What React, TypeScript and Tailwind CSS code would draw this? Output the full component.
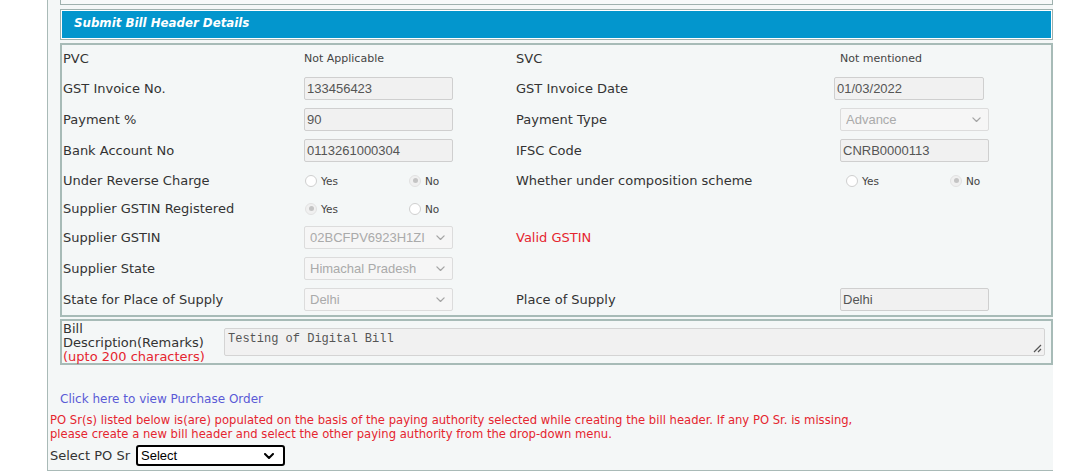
import React from 'react';

const LABEL = 'font-["DejaVu_Sans",Verdana,sans-serif] text-[13px] text-[#333]';
const BOX = 'font-["Liberation_Sans",Arial,sans-serif] text-[13px]';

const Chevron: React.FC<{ className?: string; stroke?: string; w?: number; size?: number }> = ({ className, stroke = '#a5a5a5', w = 1.4, size = 9 }) => (
  <svg className={className} width={size} height={size * 0.6} viewBox="0 0 10 6" fill="none">
    <path d="M1 1l4 4 4-4" stroke={stroke} strokeWidth={w} strokeLinecap="round" strokeLinejoin="round" />
  </svg>
);

const TextBox: React.FC<{ value: string; className?: string }> = ({ value, className = '' }) => (
  <div className={`h-[23px] flex items-center px-[2px] border border-[#cfcfcf] rounded-[2px] bg-[#f1f1f1] text-[#555] ${BOX} ${className}`}>
    {value}
  </div>
);

const SelectBox: React.FC<{ value: string; className?: string }> = ({ value, className = '' }) => (
  <div className={`h-[23px] flex items-center justify-between pl-[5px] pr-[7px] border border-[#dcdcdc] rounded-[2px] bg-[#f6f6f6] text-[#aaa] ${BOX} ${className}`}>
    <span className="whitespace-nowrap overflow-hidden">{value}</span>
    <Chevron className="shrink-0 ml-1" />
  </div>
);

const Radio: React.FC<{ checked?: boolean; label: string }> = ({ checked, label }) => (
  <span className="flex items-center gap-[4px]">
    <span className={`w-[12px] h-[12px] rounded-full border flex items-center justify-center ${checked ? 'border-[#e2e2e2] bg-[#f0f0f0]' : 'border-[#cfcfcf] bg-white'}`}>
      {checked && <span className="w-[5px] h-[5px] rounded-full bg-[#c4c4c4]" />}
    </span>
    <span className="font-['DejaVu_Sans',Verdana,sans-serif] text-[10.5px] text-[#444] mt-[3px]">{label}</span>
  </span>
);

const RadioPair: React.FC<{ yes?: boolean }> = ({ yes }) => (
  <div className="flex items-center">
    <div className="w-[105px] pl-[1px]"><Radio checked={yes} label="Yes" /></div>
    <Radio checked={!yes} label="No" />
  </div>
);

interface Row {
  h: string;
  l1: string;
  v1: React.ReactNode;
  l2?: React.ReactNode;
  v2?: React.ReactNode;
}

const small = (t: string) => <span className="block pt-[1px] font-['DejaVu_Sans',Verdana,sans-serif] text-[11px] text-[#444]">{t}</span>;

const rows: Row[] = [
  { h: 'h-[28px]', l1: 'PVC', v1: small('Not Applicable'), l2: 'SVC', v2: small('Not mentioned') },
  { h: 'h-[31px]', l1: 'GST Invoice No.', v1: <TextBox value="133456423" className="w-[149px]" />, l2: 'GST Invoice Date', v2: <TextBox value="01/03/2022" className="w-[150px] -ml-[6px]" /> },
  { h: 'h-[31px]', l1: 'Payment %', v1: <TextBox value="90" className="w-[149px]" />, l2: 'Payment Type', v2: <SelectBox value="Advance" className="w-[149px]" /> },
  { h: 'h-[31px]', l1: 'Bank Account No', v1: <TextBox value="0113261000304" className="w-[149px]" />, l2: 'IFSC Code', v2: <TextBox value="CNRB0000113" className="w-[149px]" /> },
  { h: 'h-[29px]', l1: 'Under Reverse Charge', v1: <RadioPair />, l2: 'Whether under composition scheme', v2: <div className="pl-[5px]"><RadioPair /></div> },
  { h: 'h-[27px]', l1: 'Supplier GSTIN Registered', v1: <RadioPair yes /> },
  { h: 'h-[31px]', l1: 'Supplier GSTIN', v1: <SelectBox value="02BCFPV6923H1ZI" className="w-[149px]" />, l2: <span className="text-[#e5252f]">Valid GSTIN</span> },
  { h: 'h-[31px]', l1: 'Supplier State', v1: <SelectBox value="Himachal Pradesh" className="w-[149px]" /> },
  { h: 'h-[31px]', l1: 'State for Place of Supply', v1: <SelectBox value="Delhi" className="w-[149px]" />, l2: 'Place of Supply', v2: <TextBox value="Delhi" className="w-[149px]" /> },
];

export default function App() {
  return (
    <div className="w-[1068px] h-[473px] bg-white overflow-hidden">
      <div className="ml-[47px] w-[1006px] h-[471px] border-l border-b border-[#a9bab7] bg-[#f4f7f7] flex flex-col">
        {/* previous section edge */}
        <div className="ml-[12px] h-[5px] border-x border-b border-[#9fb1ae] bg-[#f7f9f9]" />

        {/* header bar */}
        <div className="ml-[12px] mt-[4px] h-[31px] border border-[#9fb1ae] p-[1px] bg-white">
          <div className="h-full bg-[#0396cd] flex items-center pl-[12px] pb-[1px]">
            <span className="font-['DejaVu_Sans',Verdana,sans-serif] text-[11.8px] font-bold italic text-white">Submit Bill Header Details</span>
          </div>
        </div>

        {/* details */}
        <div className="ml-[12px] mt-[3px] border-2 border-[#a7bbb7] bg-[#f4f7f7]">
          {rows.map((r, i) => (
            <div key={i} className={`${r.h} grid grid-cols-[242px_212px_324px_1fr] items-center`}>
              <div className={`pl-[1px] ${LABEL}`}>{r.l1}</div>
              <div>{r.v1}</div>
              <div className={LABEL}>{r.l2}</div>
              <div>{r.v2}</div>
            </div>
          ))}
        </div>

        {/* remarks */}
        <div className="ml-[12px] mt-[2px] h-[46px] border-2 border-[#a7bbb7] flex items-start">
          <div className="w-[162px] pl-[1px] pt-[1px] font-['DejaVu_Sans',Verdana,sans-serif] text-[13px] leading-[14px] text-[#333]">
            Bill<br />Description(Remarks)<br />
            <span className="text-[#e5252f]">(upto 200 characters)</span>
          </div>
          <div className="relative mt-[7px] w-[821px] h-[28px] border border-[#d4d4d4] rounded-[2px] bg-[#f1f1f1] px-[3px] pt-[1px] font-['Liberation_Mono','Courier_New',monospace] text-[12px] text-[#555]">
            Testing of Digital Bill
            <svg className="absolute right-[2px] bottom-[2px]" width="9" height="9" viewBox="0 0 9 9">
              <path d="M8 1L1 8M8 5L5 8" stroke="#555" strokeWidth="1.2" />
            </svg>
          </div>
        </div>

        {/* links and notes */}
        <div className="ml-[12px] mt-[26px] font-['DejaVu_Sans',Verdana,sans-serif] text-[12px] text-[#5a5ad6] leading-[16px]">
          Click here to view Purchase Order
        </div>
        <div className="ml-[2px] mt-[6px] font-['DejaVu_Sans',Verdana,sans-serif] text-[11.6px] leading-[14px] text-[#e5252f]">
          PO Sr(s) listed below is(are) populated on the basis of the paying authority selected while creating the bill header. If any PO Sr. is missing,<br />
          please create a new bill header and select the other paying authority from the drop-down menu.
        </div>
        <div className="ml-[2px] mt-[4px] flex items-center gap-[6px]">
          <span className="font-['DejaVu_Sans',Verdana,sans-serif] text-[13px] text-[#333]">Select PO Sr</span>
          <div className="w-[149px] h-[21px] border-2 border-black rounded-[3px] bg-white flex items-center justify-between pl-[3px] pr-[9px] font-['Liberation_Sans',Arial,sans-serif] text-[13px] text-black">
            Select
            <Chevron stroke="#000" w={2} size={10} />
          </div>
        </div>
      </div>
    </div>
  );
}
